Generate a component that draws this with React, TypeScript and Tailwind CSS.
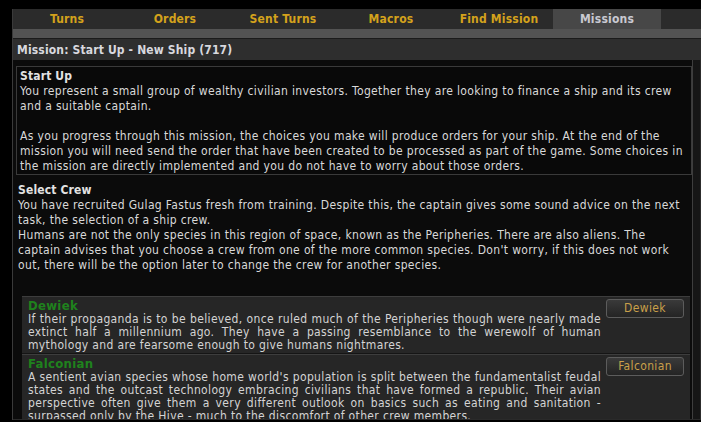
const tabs = ["Turns", "Orders", "Sent Turns", "Macros", "Find Mission", "Missions"];

const species = [
  {
    name: "Dewiek",
    text: "If their propaganda is to be believed, once ruled much of the Peripheries though were nearly made extinct half a millennium ago. They have a passing resemblance to the werewolf of human mythology and are fearsome enough to give humans nightmares.",
  },
  {
    name: "Falconian",
    text: "A sentient avian species whose home world's population is split between the fundamentalist feudal states and the outcast technology embracing civilians that have formed a republic. Their avian perspective often give them a very different outlook on basics such as eating and sanitation - surpassed only by the Hive - much to the discomfort of other crew members.",
  },
];

export default function App() {
  return (
    <div className="w-[701px] h-[422px] bg-black overflow-hidden pt-[9px] pl-[12px] font-['DejaVu_Sans_Condensed','DejaVu_Sans',sans-serif] text-[12px] tracking-[0.35px]">
      <div className="w-[689px] h-[411px] flex flex-col border-l border-[#3a3a3a]">
        {/* tabs */}
        <div className="h-[20px] bg-[#2b2b2b] flex shrink-0 tracking-[0.2px]">
          {tabs.map((t) => (
            <div
              key={t}
              className={
                t === "Missions"
                  ? "w-[108px] flex items-center justify-center font-bold bg-[#474747] text-[#c9c9d1]"
                  : "w-[108px] flex items-center justify-center font-bold text-[#d4a21c]"
              }
            >
              {t}
            </div>
          ))}
        </div>
        <div className="h-[9px] bg-[#535353] shrink-0" />
        <div className="h-[1px] bg-[#1b1b1b] shrink-0" />
        <div className="h-[21px] bg-[#2e2e2e] shrink-0 flex items-center pl-[4px] font-bold text-[#d8d8de] tracking-[0.15px]">
          Mission: Start Up - New Ship (717)
        </div>

        {/* scroll area */}
        <div className="flex-1 min-h-0 flex bg-[#0b0b0b] border-b border-[#2a2a2a]">
          <div className="flex-1 min-w-0 overflow-hidden pt-[6px] text-[#d9d9d9] leading-[15px]">
            <div className="ml-[3px] border border-[#3a3a3a] bg-[#090909] px-[3px] pt-[2px] pb-[0px]">
              <div className="font-bold text-[#e2e2e2] tracking-[0.15px]">Start Up</div>
              <p>
                You represent a small group of wealthy civilian investors. Together they are looking to finance a ship and its crew and a suitable captain.
              </p>
              <p className="mt-[15px]">
                As you progress through this mission, the choices you make will produce orders for your ship. At the end of the mission you will need send the order that have been created to be processed as part of the game. Some choices in the mission are directly implemented and you do not have to worry about those orders.
              </p>
            </div>

            <div className="pl-[5px] pr-[4px] mt-[8px]">
              <div className="font-bold text-[#e2e2e2] tracking-[0.15px]">Select Crew</div>
              <p>
                You have recruited Gulag Fastus fresh from training. Despite this, the captain gives some sound advice on the next task, the selection of a ship crew.
              </p>
              <p>
                Humans are not the only species in this region of space, known as the Peripheries. There are also aliens. The captain advises that you choose a crew from one of the more common species. Don't worry, if this does not work out, there will be the option later to change the crew for another species.
              </p>
            </div>

            <div className="ml-[9px] mr-[2px] mt-[23px]">
              {species.map((s) => (
                <div
                  key={s.name}
                  className="flex bg-[#262626] border-t border-[#3d3d3d] border-b border-b-[#151515] pl-[6px] pr-[3px] pt-[2px] pb-[1px]"
                >
                  <div className="w-[573px] shrink-0">
                    <div className="font-bold text-[13px] leading-[14px] text-[#1f821d] tracking-[0.3px]">{s.name}</div>
                    <p className="text-justify leading-[13px] text-[#d4d4d4]">{s.text}</p>
                  </div>
                  <div className="ml-[5px]">
                    <button className="w-[78px] h-[19px] rounded-[3px] border border-[#5c5c5c] bg-gradient-to-b from-[#3a3a3a] to-[#242424] text-[#caa04a] text-[12px] leading-[17px]">
                      {s.name}
                    </button>
                  </div>
                </div>
              ))}
            </div>
          </div>
          <div className="w-[9px] shrink-0 border-l border-[#3e3e3e] bg-[#161616] border-r border-r-[#2c2c2c]" />
        </div>
      </div>
    </div>
  );
}
